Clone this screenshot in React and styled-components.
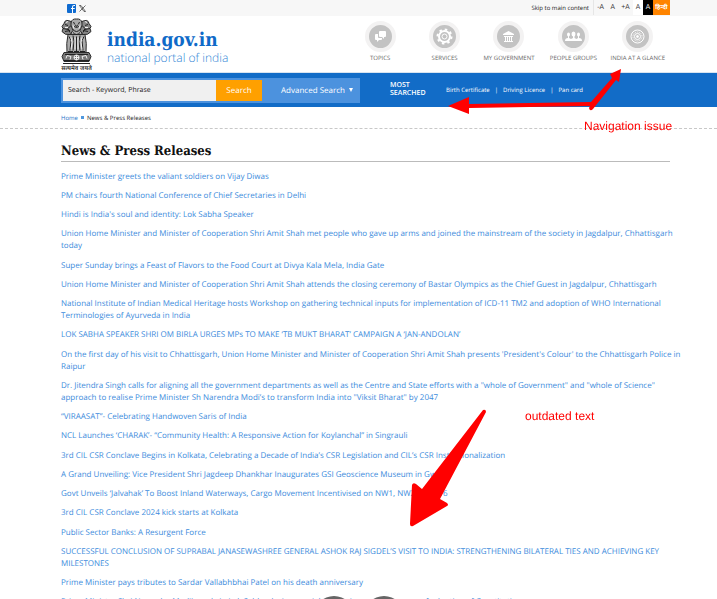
import React from "react";
import styled, { createGlobalStyle } from "styled-components";

const GlobalStyle = createGlobalStyle`
  * { box-sizing: border-box; }
  html { scrollbar-width: none; }
  body {
    margin: 0;
    background: #fff;
    color: #222;
    font-family: "Open Sans", "Noto Sans", sans-serif;
    font-size: 8px;
    text-rendering: geometricPrecision;
  }
  a { color: inherit; text-decoration: none; }
  button { font: inherit; border: 0; padding: 0; cursor: pointer; text-rendering: inherit; }
  input { text-rendering: inherit; }
`;

const Page = styled.div`
  position: relative;
  overflow-x: hidden;
`;

const Band = styled.div`
  display: flex;
  padding: 0 47px 0 61px;
`;

const TopBar = styled(Band)`
  height: 16px;
  background: #f7f7f7;
  align-items: stretch;
  justify-content: space-between;
  font-size: 7px;
`;

const Social = styled.div`
  display: flex;
  align-items: center;
  gap: 3px;
  padding-left: 6px;
  svg { display: block; }
`;

const Tools = styled.div`
  display: flex;
  align-items: stretch;
  height: 15px;
`;

const SkipLink = styled.a`
  padding-right: 4px;
  font-size: 6px;
  line-height: 16px;
`;

const SizeGroup = styled.div`
  display: flex;
  width: 40px;
  border-left: 1px solid #e6e6e6;
  justify-content: space-around;
`;

const ToolButton = styled.button`
  width: ${(p) => p.$width || "auto"};
  background: ${(p) => p.$bg || "transparent"};
  color: ${(p) => p.$color || "#333"};
  line-height: 15px;
`;

const HindiButton = styled(ToolButton)`
  font-size: 6px;
  font-weight: 700;
`;

const Masthead = styled(Band)`
  height: 57px;
  justify-content: space-between;
  align-items: flex-start;
  border-bottom: 1px solid #d8e4f0;
`;

const Brand = styled.a`
  display: flex;
  gap: 15px;
`;

const Emblem = styled.div`
  display: flex;
  flex-direction: column;
  align-items: center;
  width: 31px;
  padding-top: 2px;
  color: #222;
  font-size: 6px;
  font-weight: 600;
  line-height: 7px;
  white-space: nowrap;
  svg { display: block; }
`;

const Wordmark = styled.div`
  display: flex;
  flex-direction: column;
  padding-top: 13px;
`;

const SiteName = styled.strong`
  color: #0f6ac8;
  font: 700 19px/22px "DejaVu Serif Condensed", "DejaVu Serif", serif;
`;

const Tagline = styled.span`
  color: #3587d6;
  font-size: 12px;
  font-weight: 300;
  line-height: 14px;
  white-space: nowrap;
`;

const Nav = styled.nav`
  display: grid;
  grid-template-columns: repeat(5, 1fr);
  width: 322px;
  padding-top: 5px;
`;

const NavItem = styled.a`
  display: flex;
  flex-direction: column;
  align-items: center;
  color: #666;
  font-size: 6px;
  line-height: 12px;
  white-space: nowrap;
`;

const NavIcon = styled.span`
  display: grid;
  place-items: center;
  width: 31px;
  height: 31px;
  border: 4px solid #f3f2f2;
  border-radius: 50%;
  background: #c3c3c3;
  svg { display: block; }
`;

const SearchBand = styled(Band)`
  height: 34px;
  background: #126cc7;
  color: #fff;
  align-items: center;
`;

const SearchForm = styled.form`
  display: flex;
  width: 299px;
  height: 25px;
  padding: 2px 0 2px 2px;
  background: #4c92de;
  input {
    flex: 1;
    min-width: 0;
    border: 0;
    padding: 0 5px;
    background: #f0f0f0;
    color: #222;
    font: inherit;
    font-size: 7px;
  }
  input::placeholder { color: #222; opacity: 1; }
`;

const SearchButton = styled.button`
  width: 46px;
  background: #ffa000;
  color: #fff;
`;

const AdvancedButton = styled.button`
  display: flex;
  align-items: center;
  justify-content: center;
  gap: 4px;
  width: 98px;
  padding-left: 12px;
  background: transparent;
  color: #fff;
`;

const PopularTitle = styled.span`
  width: 56px;
  margin-left: 30px;
  font-size: 7px;
  font-weight: 600;
  line-height: 8px;
`;

const PopularLinks = styled.div`
  display: flex;
  font-size: 6px;
  line-height: 8px;
  white-space: nowrap;
  a + a::before { content: "|"; padding: 0 5px; }
`;

const Breadcrumb = styled(Band).attrs({ as: "nav" })`
  height: 22px;
  align-items: center;
  gap: 3px;
  border-bottom: 1px dashed #c8c8c8;
  font-size: 6px;
  a { color: #1c72c8; }
`;

const Bullet = styled.i`
  width: 3px;
  height: 3px;
  background: #4f98de;
`;

const Content = styled.main`
  padding: 13px 47px 0 61px;
`;

const Title = styled.h1`
  margin: 0 0 9px;
  border-bottom: 1px solid #bbb;
  color: #111;
  font: 700 13px/19px "DejaVu Serif Condensed", "DejaVu Serif", serif;
`;

const NewsList = styled.ul`
  margin: 0 -16px 0 0;
  padding: 0;
  list-style: none;
  color: #3c8bdc;
  line-height: 12px;
`;

const NewsItem = styled.li`
  padding-bottom: 7px;
  &:nth-child(4n) { padding-bottom: 8px; }
`;

const FloatingControls = styled.div`
  position: fixed;
  left: 50%;
  bottom: -37px;
  display: flex;
  gap: 10px;
  transform: translateX(-50%);
`;

const RoundButton = styled.button`
  width: 40px;
  height: 40px;
  border-radius: 50%;
  background: #666;
`;

const Markup = styled.svg`
  position: absolute;
  top: 0;
  left: 0;
  pointer-events: none;
`;

const Note = styled.span`
  position: absolute;
  left: ${(p) => p.$x};
  top: ${(p) => p.$y};
  color: #f00;
  font: 12px/14px "Liberation Sans", Arial, sans-serif;
  white-space: nowrap;
`;

const EmblemArt = () => (
  <svg width="31" height="47" viewBox="0 0 31 46" aria-hidden="true">
    <g fill="#888" stroke="#2b2b2b" strokeWidth="1">
      <path d="M10 4Q11 0 15.500 0.500Q20 0 21 4L23 10L20 17H11L8 10Z" fill="#aaa" />
      <path d="M10 3Q4 0 3 5L1 8L2 10L1 13Q4 17 9 16L12 12L10 7Z" />
      <path d="M21 3Q27 0 28 5L30 8L29 10L30 13Q27 17 22 16L19 12L21 7Z" />
      <path d="M7 16Q5 25 6 34H25Q26 25 24 16Z" fill="#aaa" />
      <path d="M3 34H28L30 38L28 43H3L1 38Z" fill="#777" />
    </g>
    <g fill="none" stroke="#222" strokeWidth="1">
      <path d="M12 4l2 1M17 5l2-1M13 8q2.500 2 5 0M14 6l1.500 2L17 6M12 11q3.500 4 7 0M12 14q3.500 4 7 0M4 6l3 1M2 10l5 1M4 13l5-1M27 6l-3 1M29 10l-5 1M27 13l-5-1M10 7L7 10l2 4M21 7l3 3-2 4" />
      <path d="M8 18l2 4-1 10M12 17l1 6-1 9M15.500 18v15M19 17l-1 6 1 9M23 18l-2 4 1 10M7 33h5M13 33h5M19 33h5" />
      <path d="M4 36h23M3 42h25M2 45h27" />
    </g>
    <g fill="none" stroke="#f2f2f2" strokeWidth="1">
      <path d="M10 19l1 5-1 7M14 19v12M17 19v12M21 19l-1 5 1 7M12 7l1 3M19 7l-1 3M5 4l2-1M24 3l2 1M4 9l3 0M24 9h3" />
      <circle cx="15.500" cy="39" r="2.500" />
      <path d="M13 39h5M15.500 36.500v5M5 40l1-3 4 1-1 3M26 40l-1-3-4 1 1 3" />
    </g>
  </svg>
);

const icons = {
  topics: (
    <svg width="13" height="13" viewBox="0 0 13 13" fill="#fff">
      <path d="M6 1h5q1 0 1 1v4q0 1-1 1h-1v2L8 7H6Q5 7 5 6V2q0-1 1-1Z" />
      <path d="M2 4h2v3q0 1 1 1h3v1q0 1-1 1H5l-2 2v-2H2q-1 0-1-1V5q0-1 1-1Z" />
    </svg>
  ),
  services: (
    <svg width="17" height="17" viewBox="0 0 17 17" fill="none" stroke="#fff">
      <circle cx="8.500" cy="8.500" r="5.500" strokeWidth="2" />
      <circle cx="8.500" cy="8.500" r="7" strokeWidth="2" strokeDasharray="2.500 3" />
      <circle cx="8.500" cy="8.500" r="2.500" strokeWidth="1" />
    </svg>
  ),
  government: (
    <svg width="13" height="13" viewBox="0 0 13 13" fill="#fff">
      <path d="M6.500 1L12 4v1H1V4ZM2 6h9v1H2ZM3 7h1v4H3ZM5 7h1v4H5ZM7 7h1v4H7ZM9 7h1v4H9ZM2 11h9v1H2Z" />
    </svg>
  ),
  people: (
    <svg width="17" height="13" viewBox="0 0 17 13" fill="#fff">
      <ellipse cx="3.500" cy="4.500" rx="1.500" ry="2" />
      <ellipse cx="8.500" cy="4" rx="2" ry="2.500" />
      <ellipse cx="13.500" cy="4.500" rx="1.500" ry="2" />
      <path d="M0 11Q0 8 3 8V6h1v2l2 1 2-1V6h1.500v2l2 1L13 8V6h1v2q3 0 3 3Z" />
    </svg>
  ),
  glance: (
    <svg width="15" height="15" viewBox="0 0 15 15" fill="none" stroke="#fff">
      <circle cx="7.500" cy="7.500" r="6.500" />
      <circle cx="7.500" cy="7.500" r="4.500" strokeDasharray="1 1" />
      <circle cx="7.500" cy="7.500" r="3" />
      <circle cx="7.500" cy="7.500" r="1" fill="#fff" />
    </svg>
  ),
};

const navItems = [
  ["topics", "TOPICS"],
  ["services", "SERVICES"],
  ["government", "MY GOVERNMENT"],
  ["people", "PEOPLE GROUPS"],
  ["glance", "INDIA AT A GLANCE"],
];

const news = [
  "Prime Minister greets the valiant soldiers on Vijay Diwas",
  "PM chairs fourth National Conference of Chief Secretaries in Delhi",
  "Hindi is India's soul and identity: Lok Sabha Speaker",
  "Union Home Minister and Minister of Cooperation Shri Amit Shah met people who gave up arms and joined the mainstream of the society in Jagdalpur, Chhattisgarh today",
  "Super Sunday brings a Feast of Flavors to the Food Court at Divya Kala Mela, India Gate",
  "Union Home Minister and Minister of Cooperation Shri Amit Shah attends the closing ceremony of Bastar Olympics as the Chief Guest in Jagdalpur, Chhattisgarh",
  "National Institute of Indian Medical Heritage hosts Workshop on gathering technical inputs for implementation of ICD-11 TM2 and adoption of WHO International Terminologies of Ayurveda in India",
  "LOK SABHA SPEAKER SHRI OM BIRLA URGES MPs TO MAKE ‘TB MUKT BHARAT’ CAMPAIGN A ‘JAN-ANDOLAN’",
  "On the first day of his visit to Chhattisgarh, Union Home Minister and Minister of Cooperation Shri Amit Shah presents 'President's Colour' to the Chhattisgarh Police in Raipur",
  "Dr. Jitendra Singh calls for aligning all the government departments as well as the Centre and State efforts with a \"whole of Government\" and \"whole of Science\" approach to realise Prime Minister Sh Narendra Modi’s to transform India into \"Viksit Bharat\" by 2047",
  "“VIRAASAT”- Celebrating Handwoven Saris of India",
  "NCL Launches ‘CHARAK’- “Community Health: A Responsive Action for Koylanchal” in Singrauli",
  "3rd CIL CSR Conclave Begins in Kolkata, Celebrating a Decade of India’s CSR Legislation and CIL’s CSR Institutionalization",
  "A Grand Unveiling: Vice President Shri Jagdeep Dhankhar Inaugurates GSI Geoscience Museum in Gwalior",
  "Govt Unveils ‘Jalvahak’ To Boost Inland Waterways, Cargo Movement Incentivised on NW1, NW2 & NW16",
  "3rd CIL CSR Conclave 2024 kick starts at Kolkata",
  "Public Sector Banks: A Resurgent Force",
  "SUCCESSFUL CONCLUSION OF SUPRABAL JANASEWASHREE GENERAL ASHOK RAJ SIGDEL’S VISIT TO INDIA: STRENGTHENING BILATERAL TIES AND ACHIEVING KEY MILESTONES",
  "Prime Minister pays tributes to Sardar Vallabhbhai Patel on his death anniversary",
  "Prime Minister Shri Narendra Modi’s reply in Lok Sabha during special discussion on anniversary of adoption of Constitution",
];

export default function App() {
  return (
    <Page>
      <GlobalStyle />
      <TopBar>
        <Social>
          <a href="#facebook" aria-label="Facebook">
            <svg width="9" height="9" viewBox="0 0 9 9">
              <rect width="9" height="9" rx="1" fill="#0f6bd0" />
              <path d="M5 9V5H4V4h1V3q0-2 2-2h1v1H7Q6 2 6 3v1h2L7.500 5H6v4Z" fill="#fff" />
            </svg>
          </a>
          <a href="#x" aria-label="X">
            <svg width="7" height="7" viewBox="0 0 7 7" fill="none" stroke="#333">
              <path d="M0.500 0.500h1.500l4.500 6H5ZM6.500 0.500l-6 6" strokeWidth="0.700" />
            </svg>
          </a>
        </Social>
        <Tools>
          <SkipLink href="#main">Skip to main content</SkipLink>
          <SizeGroup>
            <ToolButton>-A</ToolButton>
            <ToolButton>A</ToolButton>
            <ToolButton>+A</ToolButton>
          </SizeGroup>
          <ToolButton $width="10px" $bg="#fff">A</ToolButton>
          <ToolButton $width="10px" $bg="#000" $color="#fff">A</ToolButton>
          <HindiButton $width="17px" $bg="#ff8400" $color="#fff" lang="hi">हिन्दी</HindiButton>
        </Tools>
      </TopBar>

      <Masthead as="header">
        <Brand href="#home">
          <Emblem>
            <EmblemArt />
            <span lang="hi">सत्यमेव जयते</span>
          </Emblem>
          <Wordmark>
            <SiteName>india.gov.in</SiteName>
            <Tagline>national portal of india</Tagline>
          </Wordmark>
        </Brand>
        <Nav>
          {navItems.map(([key, label]) => (
            <NavItem href={`#${key}`} key={key}>
              <NavIcon>{icons[key]}</NavIcon>
              {label}
            </NavItem>
          ))}
        </Nav>
      </Masthead>

      <SearchBand>
        <SearchForm onSubmit={(e) => e.preventDefault()}>
          <input type="text" aria-label="Search" placeholder="Search - Keyword, Phrase" />
          <SearchButton type="submit">Search</SearchButton>
          <AdvancedButton type="button">
            Advanced Search
            <svg width="4" height="4" viewBox="0 0 4 4" fill="#fff"><path d="M0 0h4L2 4Z" /></svg>
          </AdvancedButton>
        </SearchForm>
        <PopularTitle>MOST SEARCHED</PopularTitle>
        <PopularLinks>
          <a href="#birth">Birth Certificate</a>
          <a href="#driving">Driving Licence</a>
          <a href="#pan">Pan card</a>
        </PopularLinks>
      </SearchBand>

      <Breadcrumb aria-label="Breadcrumb">
        <a href="#home">Home</a>
        <Bullet />
        <span>News &amp; Press Releases</span>
      </Breadcrumb>

      <Content id="main">
        <Title>News &amp; Press Releases</Title>
        <NewsList>
          {news.map((item) => (
            <NewsItem key={item}><a href="#news">{item}</a></NewsItem>
          ))}
        </NewsList>
      </Content>

      <FloatingControls>
        <RoundButton aria-label="Previous" />
        <RoundButton aria-label="Next" />
      </FloatingControls>

      <Markup width="717" height="599" viewBox="0 0 717 599" fill="#f00" aria-hidden="true">
        <path d="M448 106L469 97V104L591 102L612 78L610 74L621 69L619 82L616 80L593 109Q590 112 589 108L590 106L469 108V114Z" />
        <path d="M483 410Q486 409 486 412L440 499L447 503Q449 505 447 506L413 526Q410 527 410 524L412 485Q413 482 416 484L422 489Z" />
      </Markup>
      <Note $x="584px" $y="119px">Navigation issue</Note>
      <Note $x="525px" $y="409px">outdated text</Note>
    </Page>
  );
}
